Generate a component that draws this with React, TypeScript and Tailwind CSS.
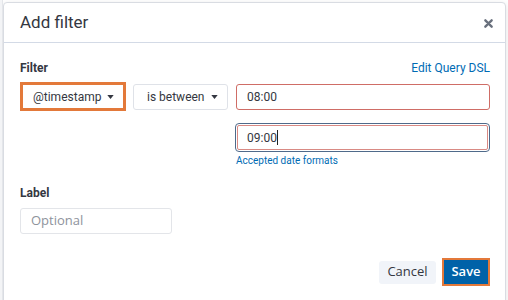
import React from 'react';

function Caret() {
  return (
    <svg className="w-[7px] h-[4px] shrink-0 text-[#343741]" viewBox="0 0 8 5" fill="currentColor">
      <path d="M0 0h8L4 5z" />
    </svg>
  );
}

export default function App() {
  return (
    <div className="w-[508px] h-[300px] overflow-hidden bg-white relative" style={{ fontFamily: 'Roboto, "Liberation Sans", sans-serif' }}>
      <div className="absolute left-0 top-0 w-[3px] h-full bg-[#f3f4f6] border-r border-[#e4e6ea]" />
      <div className="ml-[3px] mt-[2px] w-[503px] h-[320px] bg-white border border-[#d9dce2] rounded-[4px] shadow-[0_2px_6px_rgba(0,0,0,0.12)] flex flex-col">
        <div className="h-[40px] flex items-center justify-between pl-[16px] pr-[12px] border-b border-[#d3dae6]">
          <span className="text-[17px] text-[#343741]">Add filter</span>
          <svg className="w-[9px] h-[9px] text-[#69707d] mt-[2px]" viewBox="0 0 10 10" stroke="currentColor" strokeWidth={2.6} strokeLinecap="round">
            <path d="M1.5 1.5l7 7M8.5 1.5l-7 7" />
          </svg>
        </div>
        <div className="pl-[16px] pr-[15px] pt-[18px] flex flex-col">
          <div className="flex items-center justify-between h-[14px]">
            <span className="text-[12px] font-bold text-[#343741]">Filter</span>
            <span className="text-[12px] text-[#006bb4]">Edit Query DSL</span>
          </div>
          <div className="flex mt-[7px]">
            <div className="w-[106px] h-[29px] border-[3px] border-[#e3793a] bg-white flex items-center justify-between pl-[10px] pr-[9px] whitespace-nowrap">
              <span className="text-[12px] text-[#343741]">@timestamp</span>
              <Caret />
            </div>
            <div className="ml-[7px] mt-[2px] w-[95px] h-[26px] border border-[#dfe2e8] rounded-[3px] bg-white flex items-center justify-between pl-[13px] pr-[9px] whitespace-nowrap">
              <span className="text-[12px] text-[#343741]">is between</span>
              <Caret />
            </div>
            <div className="ml-[8px] mt-[2px] flex-1 flex flex-col">
              <div className="h-[26px] border border-[#cf6d66] rounded-[3px] bg-white flex items-center pl-[10px]">
                <span className="text-[12px] text-[#343741]">08:00</span>
              </div>
              <div className="mt-[13px] -ml-[1px] h-[29px] border border-[#4f6a8a] rounded-[4px] p-[1px]">
                <div className="h-full border border-[#d98a84] rounded-[2px] bg-white flex items-center pl-[9px]">
                  <span className="text-[12px] text-[#343741]">09:00</span>
                  <span className="w-px h-[15px] bg-[#222]" />
                </div>
              </div>
              <span className="mt-[3px] text-[10px] leading-[12px] text-[#006bb4]">Accepted date formats</span>
            </div>
          </div>
          <span className="mt-[19px] text-[12px] leading-[14px] font-bold text-[#343741]">Label</span>
          <div className="mt-[8px] w-[152px] h-[26px] border border-[#e3e5e9] rounded-[3px] bg-white flex items-center pl-[10px]">
            <span className="text-[13px] text-[#8e939c]" style={{ fontFamily: '"Open Sans", sans-serif' }}>Optional</span>
          </div>
          <div className="mt-[24px] flex justify-end items-center" style={{ fontFamily: '"Open Sans", sans-serif' }}>
            <div className="w-[57px] h-[23px] rounded-[3px] bg-[#f1f4f9] flex items-center justify-center text-[13px] text-[#343741]">Cancel</div>
            <div className="ml-[6px] w-[48px] h-[28px] border-[2px] border-[#e3793a] bg-[#0062a8] flex items-center justify-center text-[13px] font-semibold text-white">Save</div>
          </div>
        </div>
      </div>
    </div>
  );
}
